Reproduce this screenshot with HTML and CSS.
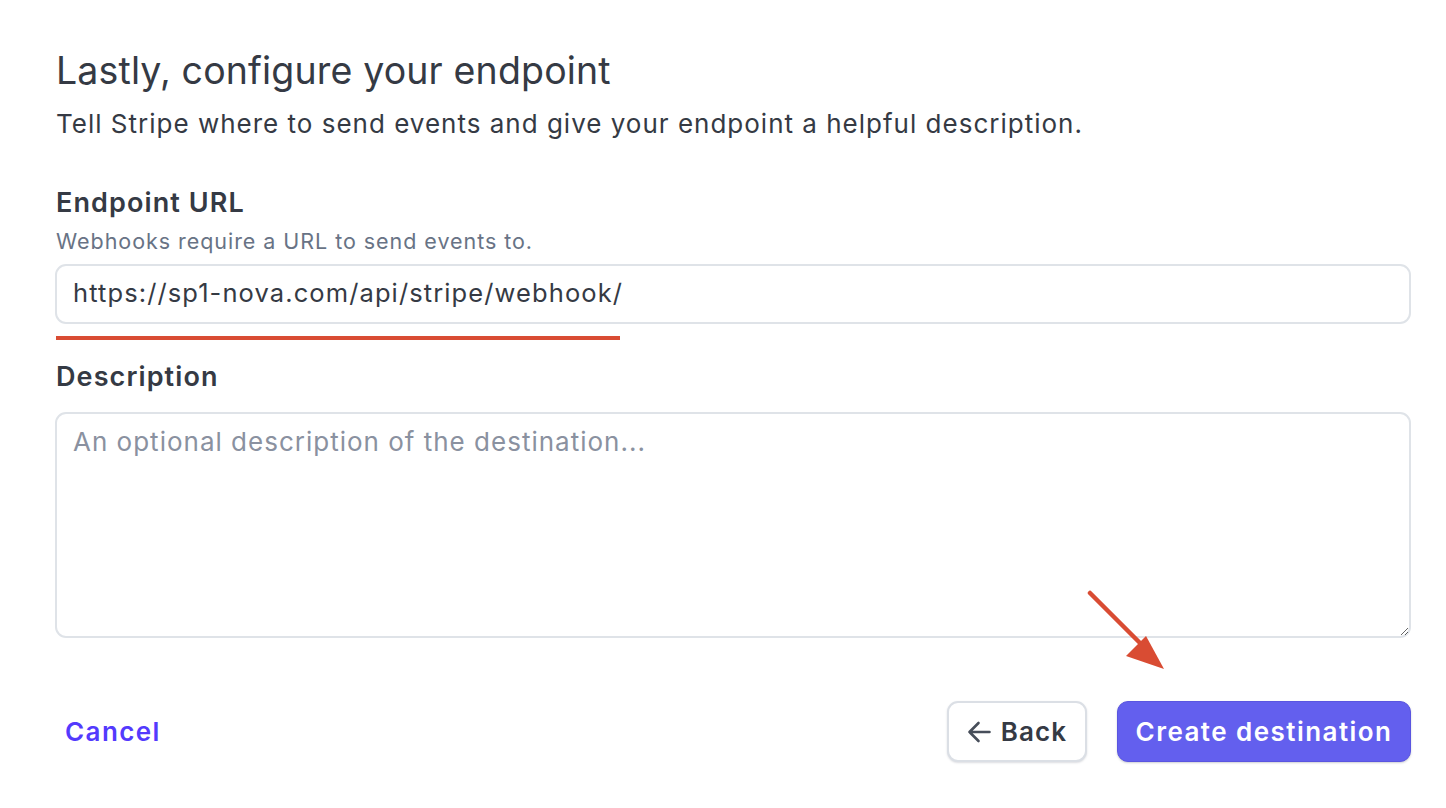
FILE: index.html
```html
<!DOCTYPE html>
<html lang="en">
<head>
<meta charset="utf-8">
<title>Configure endpoint</title>
<link rel="stylesheet" href="styles.css">
</head>
<body>
<main class="page">
  <h1 class="title">Lastly, configure your endpoint</h1>
  <p class="subtitle">Tell Stripe where to send events and give your endpoint a helpful description.</p>

  <section class="field field-url">
    <label class="label" for="url">Endpoint URL</label>
    <p class="help">Webhooks require a URL to send events to.</p>
    <input id="url" class="input" type="text" value="https://sp1-nova.com/api/stripe/webhook/">
    <div class="mark-line"></div>
  </section>

  <section class="field field-desc">
    <label class="label" for="desc">Description</label>
    <textarea id="desc" class="textarea" placeholder="An optional description of the destination..."></textarea>
  </section>

  <footer class="footer">
    <a class="cancel" href="#">Cancel</a>
    <div class="actions">
      <button class="btn btn-back" type="button">
        <svg class="back-icon" width="24" height="22" viewBox="0 0 24 22" aria-hidden="true">
          <path d="M22.5 11H2.5M11.5 2L2.5 11L11.5 20" fill="none" stroke="currentColor" stroke-width="2.6" stroke-linecap="round" stroke-linejoin="round"/>
        </svg>
        <span>Back</span>
      </button>
      <button class="btn btn-primary" type="button">Create destination</button>
    </div>
  </footer>

  <svg class="annot-arrow" width="100" height="100" viewBox="0 0 100 100" aria-hidden="true">
    <line x1="3" y1="3" x2="60" y2="60" stroke="#d94c33" stroke-width="4.5" stroke-linecap="round"/>
    <polygon points="77,79 39,66 59,46" fill="#d94c33"/>
  </svg>
</main>
</body>
</html>
```

FILE: styles.css
```css
* { box-sizing: border-box; }

html, body {
  margin: 0;
  padding: 0;
  background: #ffffff;
}

body {
  font-family: Inter, "Noto Sans", "Liberation Sans", sans-serif;
  color: #353a44;
  -webkit-font-smoothing: antialiased;
}

.page {
  position: relative;
  width: 1446px;
  height: 808px;
  padding: 49px 35px 0 55px;
  display: flex;
  flex-direction: column;
}

.title {
  margin: 0 0 0 1px;
  font-size: 37.5px;
  line-height: 44px;
  font-weight: 400;
  letter-spacing: 0.15px;
  color: #353a44;
}

.subtitle {
  margin: 15px 0 0 1px;
  font-size: 26px;
  line-height: 32px;
  font-weight: 400;
  letter-spacing: 1px;
  color: #353a44;
}

.field {
  display: flex;
  flex-direction: column;
}

.field-url { margin-top: 47px; }
.field-desc { margin-top: 21px; }

.label {
  margin-left: 1px;
  font-size: 27px;
  line-height: 32px;
  font-weight: 600;
  letter-spacing: 1.1px;
  color: #353a44;
}

.help {
  margin: 9px 0 0 1px;
  font-size: 21.5px;
  line-height: 26px;
  letter-spacing: 0.95px;
  color: #687385;
}

.input,
.textarea {
  width: 100%;
  border: 2px solid #dfe3e8;
  border-radius: 11px;
  background: #fff;
  font-family: inherit;
  font-size: 25.5px;
  letter-spacing: 1.1px;
  color: #353a44;
  outline: none;
}

.input {
  margin-top: 10px;
  height: 60px;
  padding: 0 16px 3px;
}

.textarea {
  margin-top: 19px;
  height: 226px;
  padding: 11px 16px;
  font-size: 26px;
  line-height: 34px;
  letter-spacing: 1px;
  resize: both;
}

.textarea::placeholder {
  color: #8a91a0;
}

.mark-line {
  margin: 12px 0 0 1px;
  width: 564px;
  height: 4px;
  background: #d94c33;
}

.footer {
  margin-top: 63px;
  display: flex;
  align-items: center;
  justify-content: space-between;
}

.cancel {
  margin-left: 10px;
  font-size: 26px;
  font-weight: 600;
  letter-spacing: 1.4px;
  color: #533afd;
  text-decoration: none;
}

.actions {
  display: flex;
  align-items: center;
  gap: 30px;
}

.btn {
  height: 61px;
  border-radius: 11px;
  font-family: inherit;
  font-size: 26px;
  font-weight: 600;
  letter-spacing: 1.1px;
  display: flex;
  align-items: center;
  justify-content: center;
  cursor: pointer;
  padding: 0;
}

.btn-back {
  width: 140px;
  gap: 10px;
  background: #fff;
  color: #353a44;
  border: 2px solid #dbdfe5;
  box-shadow: 0 1px 2px rgba(60, 66, 87, 0.18);
}

.back-icon { color: #474e5a; }

.btn-primary {
  width: 294px;
  background: #635fee;
  color: #fff;
  border: 1px solid #5a55e0;
  letter-spacing: 1.45px;
  box-shadow: 0 1px 2px rgba(60, 66, 87, 0.25);
}

.annot-arrow {
  position: absolute;
  left: 1087px;
  top: 590px;
}
```
